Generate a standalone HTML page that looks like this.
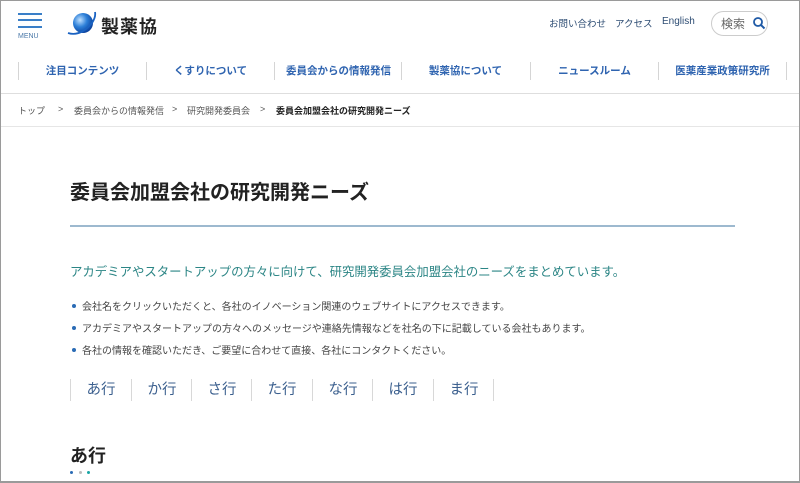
<!DOCTYPE html>
<html><head><meta charset="utf-8"><style>
*{margin:0;padding:0;box-sizing:border-box}
body{width:800px;height:483px;overflow:hidden;background:#fff;font-family:"Liberation Sans","Noto Sans CJK JP",sans-serif;position:relative}
.frame{position:absolute;inset:0;border:1px solid #9a9a9a;border-bottom:2px solid #9a9a9a;pointer-events:none;z-index:10}
.a{position:absolute;white-space:nowrap}
.hb{position:absolute;left:18px;width:24px;height:2px;background:#3a7fc8}
.nav{position:absolute;top:62px;left:18px;height:18px;width:128px;border-left:1px solid #d5d5d5;font-size:10.5px;font-weight:bold;color:#2f64b0;text-align:center;line-height:18px}
.hl{position:absolute;left:1px;right:1px;height:1px;background:#dedede}
.bc{font-size:9px;color:#555;top:104px}
.li{position:absolute;left:82px;font-size:10px;color:#444}
.li:before{content:"";position:absolute;left:-10px;top:6px;width:4px;height:4px;border-radius:50%;background:#2a6bb5}
.tab{position:absolute;top:379px;height:22px;border-left:1px solid #d8d8d8;width:61px;text-align:center;font-size:14.5px;color:#3b5f8e;line-height:22px}
</style></head><body>
<div class="frame"></div>
<div class="hb" style="top:13px"></div><div class="hb" style="top:19px"></div><div class="hb" style="top:26px"></div>
<div class="a" style="left:18px;top:33px;font-size:7px;color:#4a78a8">MENU</div>
<svg class="a" style="left:66px;top:9px" width="32" height="28" viewBox="0 0 32 28">
<defs><radialGradient id="g" cx="35%" cy="35%" r="70%"><stop offset="0" stop-color="#bfe0ff"/><stop offset="0.5" stop-color="#2c7fd8"/><stop offset="1" stop-color="#0a3f9a"/></radialGradient></defs>
<circle cx="17" cy="14" r="10" fill="url(#g)"/>
<path d="M2 24 Q14 28 26 14 Q30 8 29 3" stroke="#1a62c2" stroke-width="1.8" fill="none"/>
</svg>
<div class="a" style="left:101px;top:13px;font-size:18px;font-weight:bold;color:#222;letter-spacing:1px">製薬協</div>
<div class="a" style="left:549px;top:16px;font-size:9.5px;color:#2d4c73">お問い合わせ</div>
<div class="a" style="left:615px;top:16px;font-size:9.5px;color:#2d4c73">アクセス</div>
<div class="a" style="left:662px;top:16px;font-size:10px;color:#2d4c73">English</div>
<div class="a" style="left:711px;top:11px;width:57px;height:25px;border:1px solid #ccc;border-radius:13px"></div>
<div class="a" style="left:721px;top:15px;font-size:12px;color:#666">検索</div>
<svg class="a" style="left:752px;top:16px" width="14" height="14" viewBox="0 0 14 14"><circle cx="6" cy="6" r="4" stroke="#1f5aa6" stroke-width="1.8" fill="none"/><path d="M9 9 L12.5 12.5" stroke="#1f5aa6" stroke-width="2"/></svg>
<div class="nav" style="left:18px">注目コンテンツ</div>
<div class="nav" style="left:146px">くすりについて</div>
<div class="nav" style="left:274px">委員会からの情報発信</div>
<div class="nav" style="left:401px">製薬協について</div>
<div class="nav" style="left:530px">ニュースルーム</div>
<div class="nav" style="left:658px">医薬産業政策研究所</div>
<div class="a" style="left:786px;top:62px;height:18px;border-left:1px solid #d5d5d5"></div>
<div class="hl" style="top:93px"></div>
<div class="a bc" style="left:18px">トップ</div>
<div class="a bc" style="left:58px">&gt;</div>
<div class="a bc" style="left:74px">委員会からの情報発信</div>
<div class="a bc" style="left:172px">&gt;</div>
<div class="a bc" style="left:187px">研究開発委員会</div>
<div class="a bc" style="left:260px">&gt;</div>
<div class="a bc" style="left:276px;color:#222;font-weight:bold">委員会加盟会社の研究開発ニーズ</div>
<div class="hl" style="top:126px;background:#e6e6e6"></div>
<div class="a" style="left:70px;top:176px;font-size:20px;font-weight:bold;color:#222">委員会加盟会社の研究開発ニーズ</div>
<div class="a" style="left:70px;top:225px;width:665px;height:2px;background:#9db9cf"></div>
<div class="a" style="left:70px;top:262px;font-size:12.4px;color:#2b8585">アカデミアやスタートアップの方々に向けて、研究開発委員会加盟会社のニーズをまとめています。</div>
<div class="li" style="top:298px">会社名をクリックいただくと、各社のイノベーション関連のウェブサイトにアクセスできます。</div>
<div class="li" style="top:320px">アカデミアやスタートアップの方々へのメッセージや連絡先情報などを社名の下に記載している会社もあります。</div>
<div class="li" style="top:342px">各社の情報を確認いただき、ご要望に合わせて直接、各社にコンタクトください。</div>
<div class="tab" style="left:70px">あ行</div>
<div class="tab" style="left:131px">か行</div>
<div class="tab" style="left:191px">さ行</div>
<div class="tab" style="left:251px">た行</div>
<div class="tab" style="left:312px">な行</div>
<div class="tab" style="left:372px">は行</div>
<div class="tab" style="left:433px">ま行</div>
<div class="a" style="left:493px;top:379px;height:22px;border-left:1px solid #d8d8d8"></div>
<div class="a" style="left:70px;top:442px;font-size:18px;font-weight:bold;color:#222">あ行</div>
<div class="a" style="left:70px;top:471px;width:3px;height:3px;border-radius:50%;background:#2a6bb5"></div>
<div class="a" style="left:79px;top:471px;width:3px;height:3px;border-radius:50%;background:#bbb"></div>
<div class="a" style="left:87px;top:471px;width:3px;height:3px;border-radius:50%;background:#1aa5a5"></div>
</body></html>
